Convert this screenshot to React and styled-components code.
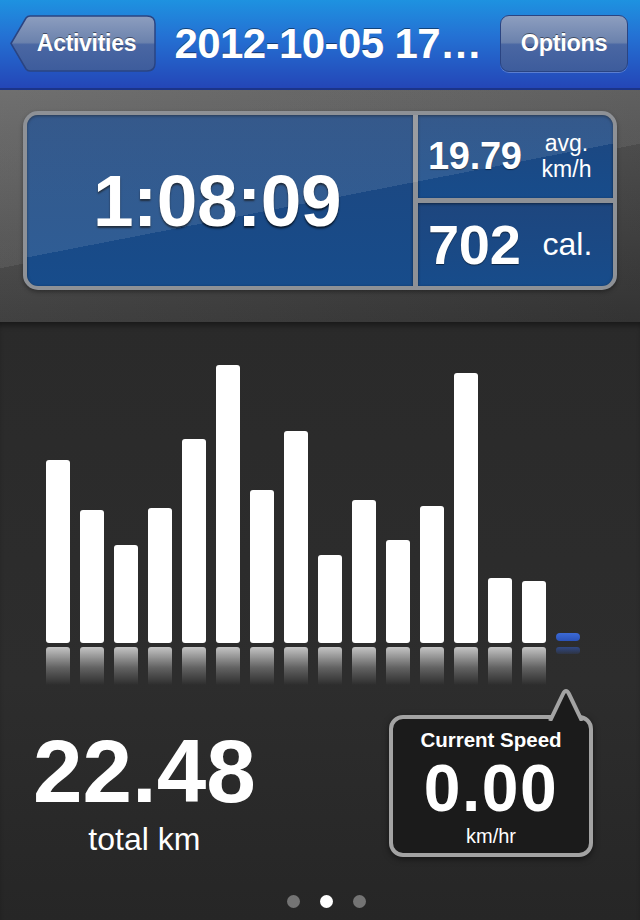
import React from 'react';
import styled, { createGlobalStyle } from 'styled-components';

const GlobalStyle = createGlobalStyle`
  html, body {
    margin: 0;
    padding: 0;
    background: #2a2a2a;
  }
  body {
    font-family: "Liberation Sans", Arial, Helvetica, sans-serif;
  }
`;

const Screen = styled.div`
  width: 640px;
  height: 920px;
  display: flex;
  flex-direction: column;
  overflow: hidden;
  color: white;
`;

/* ---------- header ---------- */

const Header = styled.header`
  height: 90px;
  box-sizing: border-box;
  padding: 15px 12px 0 10px;
  display: flex;
  align-items: flex-start;
  background: linear-gradient(#1e92e0 0%, #2472d4 40%, #2446b7 100%);
  border-bottom: 2px solid #1b3489;
`;

const BackButton = styled.div`
  position: relative;
  width: 146px;
  height: 57px;
  display: flex;
  align-items: center;
  justify-content: center;
  padding-left: 7px;
  box-sizing: border-box;
  font-size: 23px;
  font-weight: bold;
  letter-spacing: -0.3px;
  text-shadow: 0 -1px 0 rgba(0, 0, 0, 0.45);

  svg {
    position: absolute;
    left: 0;
    top: 0;
  }
  span {
    position: relative;
  }
`;

const Title = styled.h1`
  flex: 1;
  margin: 0;
  height: 57px;
  display: flex;
  align-items: center;
  justify-content: center;
  font-size: 42px;
  font-weight: bold;
  letter-spacing: -0.6px;
  white-space: nowrap;
  text-shadow: 0 -1px 0 rgba(0, 0, 0, 0.45);
`;

const OptionsButton = styled.div`
  width: 128px;
  height: 57px;
  box-sizing: border-box;
  display: flex;
  align-items: center;
  justify-content: center;
  border: 1.5px solid #2a4482;
  border-radius: 9px;
  background: linear-gradient(#8d9ebf 0%, #6b82ad 48%, #4a67a3 52%, #3d5c9c 100%);
  box-shadow: 0 1px 0 rgba(255, 255, 255, 0.25);
  font-size: 23.5px;
  font-weight: bold;
  letter-spacing: -0.3px;
  text-shadow: 0 -1px 0 rgba(0, 0, 0, 0.45);
`;

const BackShape = () => (
  <svg width="146" height="58" viewBox="0 0 146 58">
    <defs>
      <linearGradient id="btnFill" x1="0" y1="0" x2="0" y2="1">
        <stop offset="0" stopColor="#8d9ebf" />
        <stop offset="0.48" stopColor="#6b82ad" />
        <stop offset="0.52" stopColor="#4a67a3" />
        <stop offset="1" stopColor="#3d5c9c" />
      </linearGradient>
    </defs>
    <path
      d="M1 28.5 L16 3 Q17.5 1 20 1 L137 1 Q145 1 145 9 L145 48 Q145 56 137 56 L20 56 Q17.5 56 16 54 Z"
      fill="url(#btnFill)"
      stroke="#2a4482"
      strokeWidth="1.5"
    />
  </svg>
);

/* ---------- stats ---------- */

const StatsSection = styled.section`
  height: 232px;
  box-sizing: border-box;
  padding: 21px 23px 0 23px;
  background:
    linear-gradient(169deg, rgba(255, 255, 255, 0.07) 50%, rgba(0, 0, 0, 0) 50%),
    linear-gradient(100deg, rgba(255, 255, 255, 0.04), rgba(0, 0, 0, 0.12)),
    linear-gradient(#5e5e5e, #3a3a3a);
`;

const Panel = styled.div`
  position: relative;
  height: 179px;
  box-sizing: border-box;
  padding: 4px;
  display: grid;
  grid-template-columns: 1fr 195px;
  grid-template-rows: 1fr 1fr;
  gap: 5px;
  background: #8e9196;
  border-radius: 15px;
  box-shadow: 0 2px 4px rgba(0, 0, 0, 0.35);

  &::after {
    content: '';
    position: absolute;
    inset: 4px;
    border-radius: 11px;
    pointer-events: none;
    background: linear-gradient(169deg, rgba(255, 255, 255, 0.1) 50%, rgba(255, 255, 255, 0) 50%);
  }
`;

const Cell = styled.div`
  background: linear-gradient(#1e467e, #174c8b);
  border-radius: ${(p) => p.$radius};
  display: flex;
  align-items: center;
  box-shadow: inset 0 1px 3px rgba(0, 0, 0, 0.5);
`;

const MainCell = styled(Cell)`
  grid-row: 1 / span 2;
  justify-content: center;
  font-size: 73px;
  font-weight: bold;
  letter-spacing: -0.5px;
  padding-right: 6px;
  text-shadow: 0 2px 2px rgba(0, 0, 0, 0.7);
`;

const SideCell = styled(Cell)`
  padding-left: 10px;
  gap: ${(p) => p.$gap || 20}px;
`;

const SmallValue = styled.span`
  font-size: ${(p) => p.$size}px;
  font-weight: bold;
  letter-spacing: -0.3px;
  text-shadow: 0 1px 1px rgba(0, 0, 0, 0.5);
`;

const Unit = styled.span`
  font-size: ${(p) => p.$size}px;
  line-height: 1.12;
  text-align: center;
`;

/* ---------- chart ---------- */

const ChartSection = styled.section`
  flex: 1;
  display: flex;
  flex-direction: column;
  background: linear-gradient(#2a2a2a, #2d2d2d 60%, #262626);
  box-shadow: inset 0 6px 6px -3px rgba(0, 0, 0, 0.45);
`;

const BarRow = styled.div`
  margin-top: 21px;
  height: 300px;
  padding-left: 46px;
  display: flex;
  align-items: flex-end;
  gap: 10px;
`;

const Bar = styled.div`
  width: 24px;
  background: #ffffff;
  border-radius: 3px;
`;

const Marker = styled.div`
  width: 24px;
  height: 8px;
  margin-bottom: 2px;
  border-radius: 4px;
  background: linear-gradient(#3c6ad6, #2a52b8);
`;

const ReflectRow = styled.div`
  margin-top: 4px;
  height: 38px;
  padding-left: 46px;
  display: flex;
  align-items: flex-start;
  gap: 10px;
`;

const Reflection = styled.div`
  width: 24px;
  height: 38px;
  border-radius: 3px 3px 0 0;
  background: linear-gradient(rgba(255, 255, 255, 0.72), rgba(255, 255, 255, 0.25) 55%, rgba(255, 255, 255, 0));
`;

const MarkerReflection = styled.div`
  width: 24px;
  height: 7px;
  border-radius: 3px;
  background: linear-gradient(rgba(50, 90, 190, 0.6), rgba(50, 90, 190, 0.15));
`;

const BottomRow = styled.div`
  display: flex;
  justify-content: space-between;
  align-items: flex-start;
  padding: 0 47px 0 33px;
`;

const TotalBlock = styled.div`
  margin-top: 46px;
  display: flex;
  flex-direction: column;
  align-items: center;
`;

const TotalValue = styled.div`
  font-size: 89px;
  font-weight: bold;
  line-height: 80px;
  letter-spacing: 0;
`;

const TotalLabel = styled.div`
  font-size: 32px;
  line-height: 36px;
  margin-top: 10px;
`;

const Bubble = styled.div`
  position: relative;
  margin-top: 30px;
  width: 204px;
  height: 142px;
  box-sizing: border-box;
  border: 4px solid #a3a3a3;
  border-radius: 14px;
  background: #1b1b1b;
  box-shadow: 0 2px 6px rgba(0, 0, 0, 0.5);
  display: flex;
  flex-direction: column;
  align-items: center;
  padding-top: 9px;

  svg {
    position: absolute;
    right: 5px;
    top: -31px;
  }
`;

const BubbleLabel = styled.div`
  font-size: 20.5px;
  font-weight: bold;
  line-height: 23px;
`;

const BubbleValue = styled.div`
  font-size: 66px;
  font-weight: bold;
  line-height: 74px;
  letter-spacing: 1.5px;
`;

const BubbleUnit = styled.div`
  font-size: 20px;
  line-height: 23px;
`;

const Dots = styled.div`
  margin-top: auto;
  padding: 0 0 12px 12px;
  display: flex;
  justify-content: center;
  gap: 20px;
`;

const Dot = styled.div`
  width: 13px;
  height: 13px;
  border-radius: 50%;
  background: ${(p) => (p.$active ? '#ffffff' : '#747474')};
`;

const bars = [183, 133, 98, 135, 204, 278, 153, 212, 88, 143, 103, 137, 270, 65, 62];

export default function App() {
  return (
    <>
      <GlobalStyle />
      <Screen>
        <Header>
          <BackButton>
            <BackShape />
            <span>Activities</span>
          </BackButton>
          <Title>2012-10-05 17…</Title>
          <OptionsButton>Options</OptionsButton>
        </Header>

        <StatsSection>
          <Panel>
            <MainCell $radius="11px 0 0 11px">1:08:09</MainCell>
            <SideCell $radius="0 11px 0 0" $gap={20}>
              <SmallValue $size={38}>19.79</SmallValue>
              <Unit $size={23}>
                avg.
                <br />
                km/h
              </Unit>
            </SideCell>
            <SideCell $radius="0 0 11px 0" $gap={22}>
              <SmallValue $size={56}>702</SmallValue>
              <Unit $size={32}>cal.</Unit>
            </SideCell>
          </Panel>
        </StatsSection>

        <ChartSection>
          <BarRow>
            {bars.map((h, i) => (
              <Bar key={i} style={{ height: h }} />
            ))}
            <Marker />
          </BarRow>
          <ReflectRow>
            {bars.map((h, i) => (
              <Reflection key={i} />
            ))}
            <MarkerReflection />
          </ReflectRow>

          <BottomRow>
            <TotalBlock>
              <TotalValue>22.48</TotalValue>
              <TotalLabel>total km</TotalLabel>
            </TotalBlock>
            <Bubble>
              <svg width="36" height="33" viewBox="0 0 36 33">
                <path d="M2 33 L15 6 Q18 0 21 6 L34 33" fill="#1b1b1b" stroke="#a3a3a3" strokeWidth="4" strokeLinejoin="round" />
              </svg>
              <BubbleLabel>Current Speed</BubbleLabel>
              <BubbleValue>0.00</BubbleValue>
              <BubbleUnit>km/hr</BubbleUnit>
            </Bubble>
          </BottomRow>

          <Dots>
            <Dot />
            <Dot $active />
            <Dot />
          </Dots>
        </ChartSection>
      </Screen>
    </>
  );
}
